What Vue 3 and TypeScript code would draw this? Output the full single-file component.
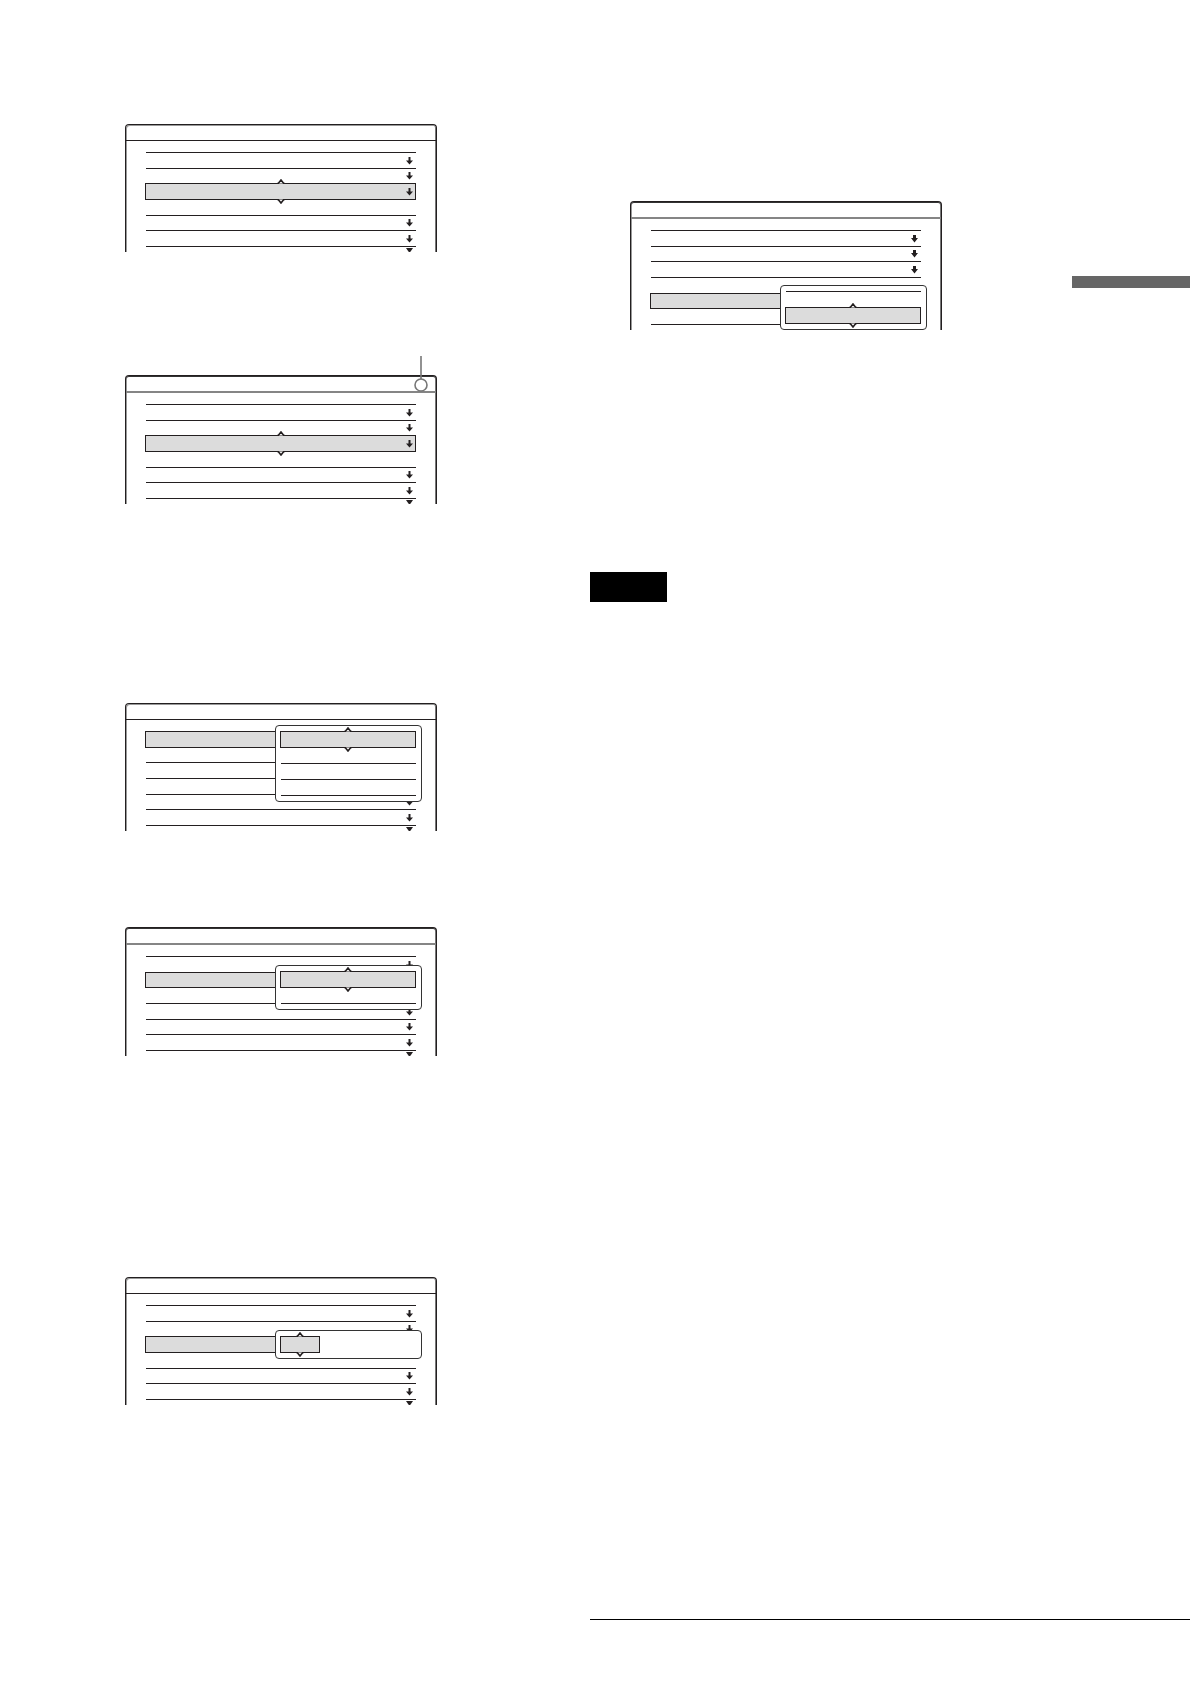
<script setup lang="ts">
type Cell = 'arrow' | 'blank' | 'selected' | 'selected-arrow' | 'chosen'

interface Popup {
  top: number
  cells: Cell[]
  narrow?: boolean
}

interface Screen {
  id: string
  heavy?: boolean
  soft?: boolean
  bold?: boolean
  callout?: boolean
  more: boolean
  rows: Cell[]
  popup?: Popup
}

const steps: Screen[] = [
  {
    id: 'first',
    more: true,
    rows: ['arrow', 'arrow', 'selected-arrow', 'blank', 'arrow', 'arrow'],
  },
  {
    id: 'marked',
    heavy: true,
    soft: true,
    callout: true,
    more: true,
    rows: ['arrow', 'arrow', 'selected-arrow', 'blank', 'arrow', 'arrow'],
  },
  {
    id: 'options',
    more: true,
    rows: ['chosen', 'blank', 'blank', 'blank', 'arrow', 'arrow'],
    popup: { top: 22, cells: ['selected', 'blank', 'blank', 'blank', 'blank'] },
  },
  {
    id: 'pair',
    heavy: true,
    soft: true,
    more: true,
    rows: ['arrow', 'chosen', 'blank', 'arrow', 'arrow', 'arrow'],
    popup: { top: 38, cells: ['selected', 'blank', 'blank'] },
  },
  {
    id: 'value',
    more: true,
    rows: ['arrow', 'arrow', 'chosen', 'blank', 'arrow', 'arrow'],
    popup: { top: 53, cells: ['selected'], narrow: true },
  },
]

const result: Screen = {
  id: 'result',
  heavy: true,
  soft: true,
  bold: true,
  more: false,
  rows: ['arrow', 'arrow', 'arrow', 'blank', 'chosen', 'blank'],
  popup: { top: 84, cells: ['blank', 'selected'] },
}

const columns = [
  { name: 'left', screens: steps },
  { name: 'right', screens: [result] },
]

const hasArrow = (c: Cell) => c === 'arrow' || c === 'selected-arrow'
const hasCarets = (c: Cell) => c === 'selected' || c === 'selected-arrow'
const isFilled = (c: Cell) => hasCarets(c) || c === 'chosen'
const afterFilled = (cells: Cell[], i: number) => i > 0 && isFilled(cells[i - 1])
</script>

<template>
  <main class="page">
    <section v-for="col in columns" :key="col.name" :class="['column', col.name]">
      <figure
        v-for="s in col.screens"
        :key="s.id"
        :class="['screen', s.id, { heavy: s.heavy, soft: s.soft }]"
      >
        <div class="frame">
          <div class="title"></div>
          <ul class="list">
            <li
              v-for="(c, i) in s.rows"
              :key="i"
              :class="['row', { filled: isFilled(c), plain: afterFilled(s.rows, i) }]"
            >
              <svg v-if="hasCarets(c)" class="caret up" viewBox="0 0 8 5"><path d="M0 4.5H1.2L4 1L6.8 4.5H8" /></svg>
              <svg v-if="hasArrow(c)" class="arrow" viewBox="0 0 7 8">
                <path :d="s.bold ? 'M2 0H5V3H7L3.5 7.5L0 3H2Z' : 'M2.5 0H4.5V3.5H7L3.5 7.5L0 3.5H2.5Z'" />
              </svg>
              <svg v-if="hasCarets(c)" class="caret down" viewBox="0 0 8 5"><path d="M0 4.5H1.2L4 1L6.8 4.5H8" /></svg>
            </li>
          </ul>
          <div class="more">
            <svg v-if="s.more" class="triangle" viewBox="0 0 7 4"><path d="M0 0H7L4.2 4H2.8Z" /></svg>
          </div>
        </div>
        <ul v-if="s.popup" class="popup" :style="{ top: s.popup.top + 'px' }">
          <li
            v-for="(c, i) in s.popup.cells"
            :key="i"
            :class="['row', { filled: isFilled(c), plain: afterFilled(s.popup.cells, i), narrow: s.popup.narrow }]"
          >
            <svg v-if="hasCarets(c)" class="caret up" viewBox="0 0 8 5"><path d="M0 4.5H1.2L4 1L6.8 4.5H8" /></svg>
            <svg v-if="hasCarets(c)" class="caret down" viewBox="0 0 8 5"><path d="M0 4.5H1.2L4 1L6.8 4.5H8" /></svg>
          </li>
        </ul>
        <svg v-if="s.callout" class="callout" viewBox="0 0 14 36">
          <path d="M7 0V23" />
          <circle cx="7" cy="29" r="6" />
        </svg>
      </figure>
      <template v-if="col.name === 'right'">
        <div class="label"></div>
        <hr class="rule" />
      </template>
    </section>
    <div class="tab"></div>
  </main>
</template>

<style>
body {
  margin: 0;
  background: #fff;
}
</style>

<style scoped>
.page {
  position: relative;
  display: grid;
  grid-template-columns: 59fr 60fr;
  font-family: "Liberation Sans", sans-serif;
}
.column {
  display: flex;
  flex-direction: column;
  align-items: flex-start;
  min-width: 0;
}
.left {
  padding: 124px 0 277px 125px;
}
.right {
  padding: 201px 0 62px;
}
.screen {
  position: relative;
  width: 312px;
  margin: 0;
}
.marked {
  margin-top: 123px;
}
.options {
  margin-top: 199px;
}
.pair {
  margin-top: 96px;
}
.value {
  margin-top: 221px;
}
.result {
  margin-left: 40px;
}
.frame {
  box-sizing: border-box;
  height: 128px;
  border: 1px solid #231f20;
  border-bottom: 0;
  border-radius: 4px 4px 0 0;
  box-shadow: inset 1px 1px 0 #999, inset -1px 0 0 #777;
  overflow: hidden;
}
.heavy .frame {
  height: 129px;
  box-shadow: inset 0 1px 0 #333, inset 1px 0 0 #999, inset -1px 0 0 #777;
}
.title {
  height: 15px;
  border-bottom: 1px solid #231f20;
}
.soft .title {
  border-bottom: 2px solid #858585;
}
.list {
  display: grid;
  grid-auto-rows: 1fr;
  height: 94px;
  margin: 11px 20px 0;
  padding: 0;
  list-style: none;
}
.row {
  position: relative;
  display: flex;
  align-items: center;
  justify-content: flex-end;
  padding-top: 1px;
  border-top: 1px solid #231f20;
}
.row.plain {
  border-top-color: transparent;
}
.row.filled {
  z-index: 1;
  margin: 0 0 -1px -1px;
  padding-top: 0;
  border: 1px solid #231f20;
  background: #dcdcdc;
}
.arrow {
  width: 7px;
  height: 8px;
  margin-right: 3px;
  fill: #231f20;
}
.filled .arrow {
  margin-right: 2px;
}
.caret {
  position: absolute;
  left: 50%;
  width: 8px;
  height: 5px;
  margin-left: -4px;
  fill: #fff;
  stroke: #231f20;
  stroke-width: 1.6;
}
.up {
  top: -5px;
}
.down {
  bottom: -5px;
  transform: scaleY(-1);
}
.more {
  display: flex;
  justify-content: flex-end;
  margin: 0 20px;
  padding: 1px 3px 0 0;
  border-top: 1px solid #231f20;
}
.triangle {
  width: 7px;
  height: 4px;
  fill: #231f20;
}
.popup {
  position: absolute;
  left: 150px;
  z-index: 2;
  box-sizing: border-box;
  width: 147px;
  margin: 0;
  padding: 5px 5px 6px 4px;
  border: 1px solid #333;
  border-radius: 4px;
  background: #fff;
  list-style: none;
}
.popup .row {
  height: 14px;
  margin-left: 1px;
}
.popup .row.filled {
  height: 15px;
  margin-left: 0;
}
.popup .row.narrow {
  width: 38px;
}
.popup .row:last-child:not(.filled) {
  height: 0;
  margin-bottom: -1px;
  padding: 0;
}
.callout {
  position: absolute;
  top: -19px;
  right: 9px;
  width: 14px;
  height: 36px;
  fill: none;
  stroke: #777;
  stroke-width: 1.6;
}
.label {
  width: 77px;
  height: 30px;
  margin-top: 242px;
  background: #000;
}
.rule {
  width: 100%;
  height: 1px;
  margin: auto 0 0;
  border: 0;
  background: #000;
}
.tab {
  position: absolute;
  top: 276px;
  right: 0;
  width: 118px;
  height: 12px;
  background: #666;
}
</style>
